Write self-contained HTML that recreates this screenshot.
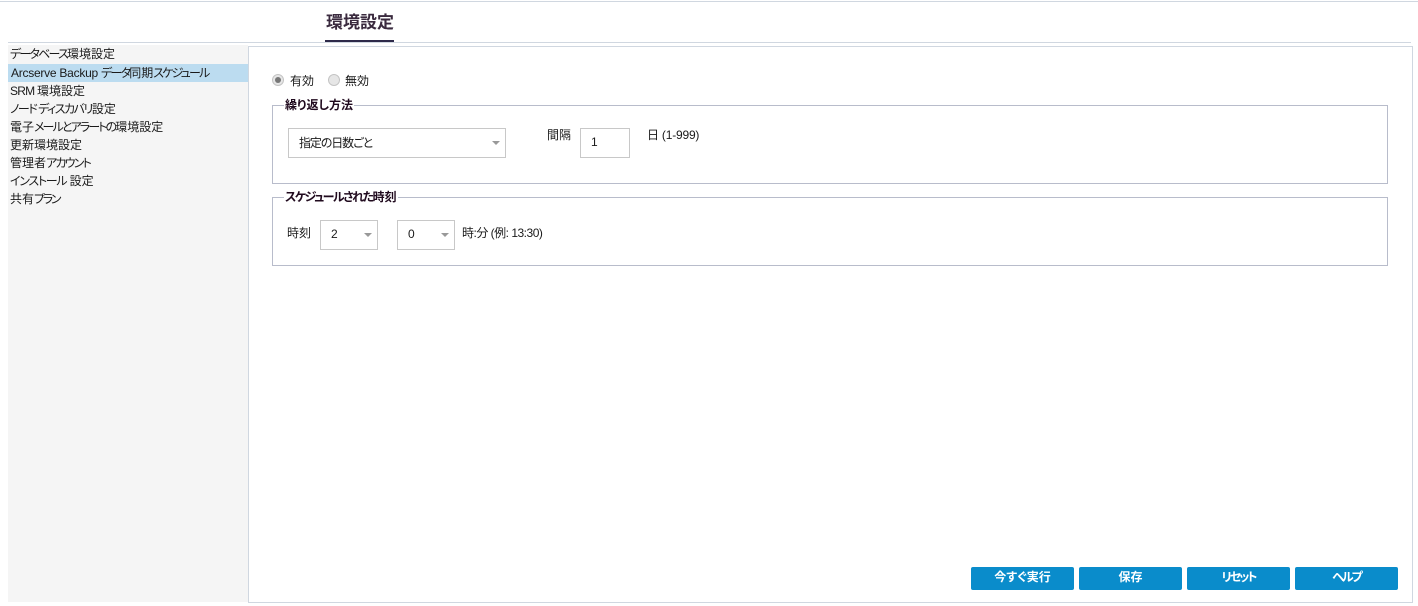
<!DOCTYPE html>
<html lang="ja"><head><meta charset="utf-8">
<style>
html,body{margin:0;padding:0;width:1418px;height:606px;overflow:hidden;background:#fff}
body{position:relative;font-family:"Liberation Sans","Noto Sans CJK JP",sans-serif;font-size:12px;color:#1a1a1a;font-feature-settings:"palt" 1}
.a{position:absolute;white-space:nowrap}
.line{position:absolute;background:#d0d7e0}
.item{position:absolute;left:10px;height:18px;line-height:18px;white-space:nowrap}
.k{letter-spacing:-1.8px}
.box{position:absolute;border:1px solid #c8c8c8;background:#fff;box-sizing:border-box}
.fs{position:absolute;border:1px solid #b8bccb;box-sizing:border-box}
.lg{position:absolute;background:#fff;font-weight:bold;color:#200a1e;height:14px;line-height:14px;padding:0 1px;white-space:nowrap;font-size:12px}
.tri{position:absolute;width:0;height:0;border-left:4px solid transparent;border-right:4px solid transparent;border-top:4px solid #999}
.btn{position:absolute;top:567px;width:103px;height:23px;line-height:21px;background:#0a8ccb;color:#fff;text-align:center;font-weight:bold;border-radius:2px}
.r{position:absolute;width:12px;height:12px;border-radius:50%;box-sizing:border-box;border:1px solid #c4c4c4;background:#e6e6e6}
</style></head><body>
<div class="line" style="left:0;top:1px;width:1418px;height:1px"></div>
<div class="a" style="left:326px;top:13px;font-size:17px;line-height:20px;font-weight:bold;color:#3a2a3e">環境設定</div>
<div class="line" style="left:8px;top:42px;width:1403px;height:1px"></div>
<div class="a" style="left:325px;top:40px;width:69px;height:2px;background:#2e2a4a"></div>

<div class="a" style="left:8px;top:45px;width:240px;height:557px;background:#f5f5f5"></div>
<div class="a" style="left:8px;top:64px;width:240px;height:18px;background:#bcdcf0"></div>
<div class="item" style="top:45px"><span class="k">データベース</span>環境設定</div>
<div class="item" style="top:64px;left:11px"><span style="letter-spacing:-.25px">Arcserve Backup </span><span class="k">データ</span>同期<span class="k">スケジュール</span></div>
<div class="item" style="top:82px"><span style="letter-spacing:-.75px">SRM </span>環境設定</div>
<div class="item" style="top:100px"><span style="letter-spacing:-1.5px">ノード ディスカバリ</span>設定</div>
<div class="item" style="top:118px">電子<span style="letter-spacing:-1.9px">メールとアラートの</span>環境設定</div>
<div class="item" style="top:136px">更新環境設定</div>
<div class="item" style="top:154px">管理者<span class="k">アカウント</span></div>
<div class="item" style="top:172px"><span style="letter-spacing:-1.3px">インストール</span> 設定</div>
<div class="item" style="top:190px">共有<span style="letter-spacing:-2.3px">プラン</span></div>

<div class="a" style="left:248px;top:46px;width:1165px;height:557px;box-sizing:border-box;border:1px solid #d0d7e0;background:#fff"></div>

<div class="r" style="left:272px;top:74px"></div>
<div class="a" style="left:275px;top:77px;width:6px;height:6px;border-radius:50%;background:#777"></div>
<div class="a" style="left:290px;top:74px;line-height:15px">有効</div>
<div class="r" style="left:328px;top:74px"></div>
<div class="a" style="left:345px;top:74px;line-height:15px">無効</div>

<div class="fs" style="left:272px;top:105px;width:1116px;height:79px"></div>
<div class="lg" style="left:284px;top:98px">繰り返し方法</div>
<div class="box" style="left:288px;top:128px;width:218px;height:30px"></div>
<div class="a" style="left:299px;top:136px;line-height:15px;letter-spacing:-1.1px">指定の日数ごと</div>
<div class="tri" style="left:492px;top:141px"></div>
<div class="a" style="left:547px;top:128px;line-height:15px">間隔</div>
<div class="box" style="left:580px;top:128px;width:50px;height:30px"></div>
<div class="a" style="left:591px;top:135px;line-height:15px">1</div>
<div class="a" style="left:647px;top:128px;line-height:15px;letter-spacing:-.2px">日 (1-999)</div>

<div class="fs" style="left:272px;top:197px;width:1116px;height:69px"></div>
<div class="lg" style="left:284px;top:190px"><span style="letter-spacing:-1.5px">スケジュールされた</span>時刻</div>
<div class="a" style="left:287px;top:226px;line-height:15px">時刻</div>
<div class="box" style="left:320px;top:220px;width:58px;height:30px"></div>
<div class="a" style="left:331px;top:227px;line-height:15px">2</div>
<div class="tri" style="left:364px;top:233px"></div>
<div class="box" style="left:397px;top:220px;width:58px;height:30px"></div>
<div class="a" style="left:408px;top:227px;line-height:15px">0</div>
<div class="tri" style="left:441px;top:233px"></div>
<div class="a" style="left:462px;top:226px;line-height:15px;letter-spacing:-.5px">時:分 (例: 13:30)</div>

<div class="btn" style="left:971px">今すぐ実行</div>
<div class="btn" style="left:1079px">保存</div>
<div class="btn" style="left:1187px;letter-spacing:-2px">リセット</div>
<div class="btn" style="left:1295px;letter-spacing:-2px">ヘルプ</div>
</body></html>
